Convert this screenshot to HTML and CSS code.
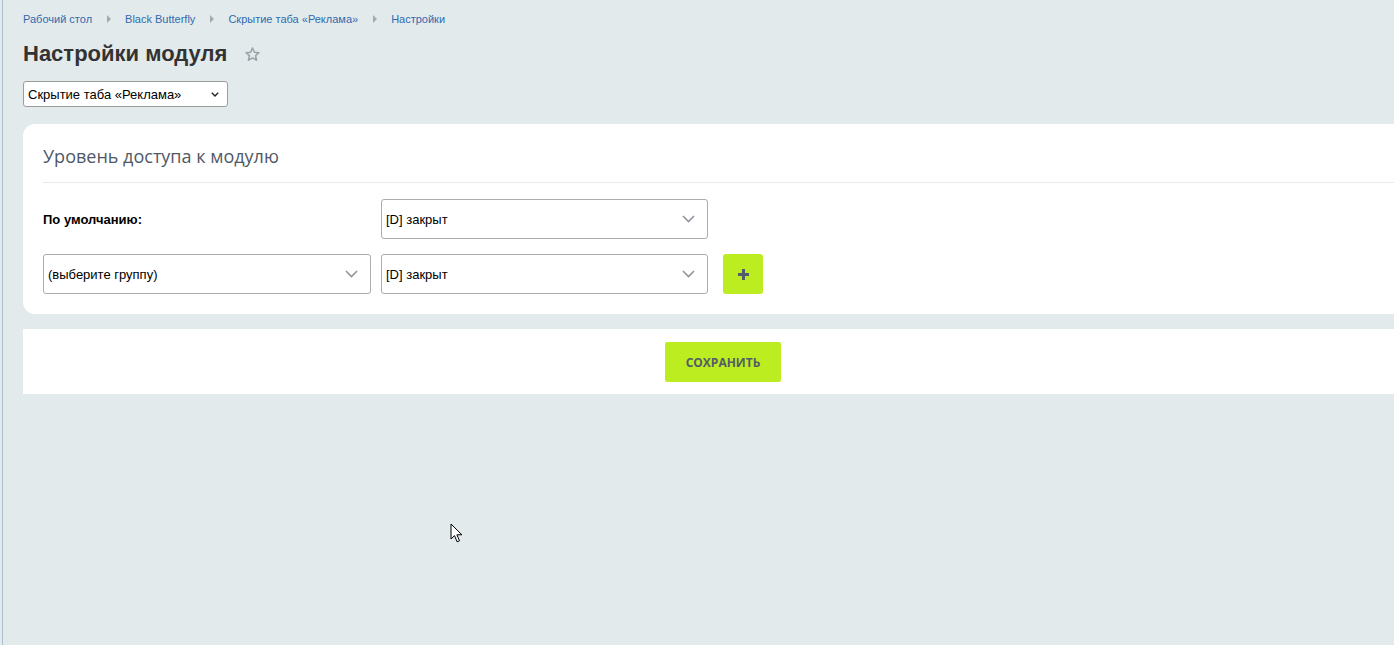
FILE: index.html
```html
<!DOCTYPE html>
<html lang="ru">
<head>
  <meta charset="UTF-8">
  <meta name="viewport" content="width=device-width, initial-scale=1.0">
  <title>Настройки модуля</title>
  <link rel="stylesheet" href="styles.css">
</head>
<body>
  <div class="page">
    <!-- Breadcrumbs -->
    <nav class="breadcrumbs">
      <a href="#">Рабочий стол</a>
      <span class="crumb-arrow"></span>
      <a href="#">Black Butterfly</a>
      <span class="crumb-arrow"></span>
      <a href="#">Скрытие таба «Реклама»</a>
      <span class="crumb-arrow"></span>
      <a href="#">Настройки</a>
    </nav>

    <div class="title-row">
      <h1>Настройки модуля</h1>
      <svg class="star" width="17" height="17" viewBox="0 0 24 24">
        <path d="M12 2.8l2.7 6 6.5.6-4.9 4.3 1.5 6.4L12 16.8l-5.8 3.3 1.5-6.4-4.9-4.3 6.5-.6z" fill="none" stroke="#9aa3aa" stroke-width="2.2" stroke-linejoin="round"/>
      </svg>
    </div>

    <div class="module-select-wrap">
      <select class="module-select">
        <option>Скрытие таба «Реклама»</option>
      </select>
      <svg class="mini-chevron" width="8" height="5" viewBox="0 0 8 5"><path d="M.8 .8L4 4 7.2 .8" fill="none" stroke="#222" stroke-width="1.4"/></svg>
    </div>

    <!-- Access card -->
    <div class="card">
      <div class="card-title">Уровень доступа к модулю</div>
      <div class="access-grid">
        <div class="access-label">По умолчанию:</div>
        <div class="select-wrap">
          <select class="field"><option>[D] закрыт</option></select>
          <svg class="chevron" width="13" height="8" viewBox="0 0 13 8"><path d="M1 1l5.5 5.5L12 1" fill="none" stroke="#8e959c" stroke-width="1.6"/></svg>
        </div>
        <div></div>

        <div class="select-wrap">
          <select class="field"><option>(выберите группу)</option></select>
          <svg class="chevron" width="13" height="8" viewBox="0 0 13 8"><path d="M1 1l5.5 5.5L12 1" fill="none" stroke="#8e959c" stroke-width="1.6"/></svg>
        </div>
        <div class="select-wrap">
          <select class="field"><option>[D] закрыт</option></select>
          <svg class="chevron" width="13" height="8" viewBox="0 0 13 8"><path d="M1 1l5.5 5.5L12 1" fill="none" stroke="#8e959c" stroke-width="1.6"/></svg>
        </div>
        <button type="button" class="add-btn">
          <svg width="11" height="11" viewBox="0 0 11 11"><rect x="4" y="0" width="3" height="11" fill="#535c69"/><rect x="0" y="4" width="11" height="3" fill="#535c69"/></svg>
        </button>
      </div>
    </div>

    <div class="footer-panel">
      <button type="button" class="save-btn">Сохранить</button>
    </div>
  </div>

  <!-- mouse pointer in the screenshot -->
  <svg class="cursor" width="13" height="21" viewBox="0 0 13 21">
    <path d="M1 1v15l3.5-3.4 2.6 6.2 2.4-1-2.6-6h5z" fill="#fff" stroke="#000" stroke-width="1" stroke-linejoin="round"/>
  </svg>
</body>
</html>
```

FILE: styles.css
```css
html {
  overflow: hidden;
}

body {
  margin: 0;
  padding-left: 2px;
  background-color: #e3eaec;
  font-family: "Liberation Sans", Arial, sans-serif;
  color: #333;
  min-height: 645px;
}

.page {
  border-left: 1px solid #a9c0d3;
  padding-left: 20px;
  min-height: 645px;
  width: 1400px;
}

/* Breadcrumbs */
.breadcrumbs {
  display: flex;
  align-items: center;
  padding-top: 12px;
  height: 14px;
  font-size: 11px;
  line-height: 14px;
}

.breadcrumbs a {
  color: #2f6ab0;
  text-decoration: none;
}

.crumb-arrow {
  width: 0;
  height: 0;
  border-top: 4px solid transparent;
  border-bottom: 4px solid transparent;
  border-left: 4px solid #a3a9ae;
  margin: 0 14px 0 15px;
}

/* Title */
.title-row {
  display: flex;
  align-items: center;
  margin-top: 13px;
  height: 30px;
}

h1 {
  margin: 0;
  font-size: 22px;
  line-height: 30px;
  font-weight: bold;
  color: #333;
}

.star {
  margin-left: 17px;
}

.module-select-wrap {
  position: relative;
  width: 205px;
  margin-top: 12px;
}

.module-select {
  display: block;
  width: 205px;
  height: 26px;
  appearance: none;
  -webkit-appearance: none;
  font-family: "Liberation Sans", Arial, sans-serif;
  font-size: 13px;
  color: #000;
  background: #fff;
  border: 1px solid #9c9c9c;
  border-radius: 3px;
  padding: 0 20px 0 4px;
}

.mini-chevron {
  position: absolute;
  right: 9px;
  top: 11px;
  pointer-events: none;
}

/* Card */
.card {
  margin-top: 17px;
  background: #fff;
  border-radius: 12px 0 0 12px;
  padding: 0 0 20px 20px;
}

.card-title {
  padding-top: 20px;
  padding-bottom: 14px;
  border-bottom: 1px solid #e8ebed;
  font-family: "Open Sans", sans-serif;
  font-size: 18px;
  line-height: 24px;
  color: #4f5864;
}

.access-grid {
  display: grid;
  grid-template-columns: 328px 327px 40px;
  grid-auto-rows: 40px;
  column-gap: 10px;
  row-gap: 15px;
  margin-top: 16px;
}

.access-grid > :nth-child(3n) {
  margin-left: 5px;
}

.access-label {
  display: flex;
  align-items: center;
  font-size: 13px;
  font-weight: bold;
  color: #000;
}

.select-wrap {
  position: relative;
}

.field {
  width: 100%;
  height: 40px;
  appearance: none;
  -webkit-appearance: none;
  background: #fff;
  border: 1px solid #a8adb2;
  border-radius: 3px;
  padding: 0 30px 0 4px;
  font-family: "Liberation Sans", Arial, sans-serif;
  font-size: 13px;
  color: #000;
}

.chevron {
  position: absolute;
  right: 13px;
  top: 16px;
  pointer-events: none;
}

.add-btn {
  width: 40px;
  height: 40px;
  border: none;
  border-radius: 3px;
  background-color: #bbed21;
  display: flex;
  align-items: center;
  justify-content: center;
  padding: 0;
  cursor: pointer;
}

/* Footer with save */
.footer-panel {
  margin-top: 15px;
  background: #fff;
  height: 65px;
  padding-top: 13px;
  box-sizing: border-box;
  text-align: center;
}

.save-btn {
  width: 116px;
  height: 40px;
  border: none;
  border-radius: 2px;
  background-color: #bbed21;
  font-family: "Open Sans", sans-serif;
  font-size: 12px;
  font-weight: bold;
  text-transform: uppercase;
  color: #535c69;
  cursor: pointer;
}

.cursor {
  position: absolute;
  left: 450px;
  top: 523px;
}
```
